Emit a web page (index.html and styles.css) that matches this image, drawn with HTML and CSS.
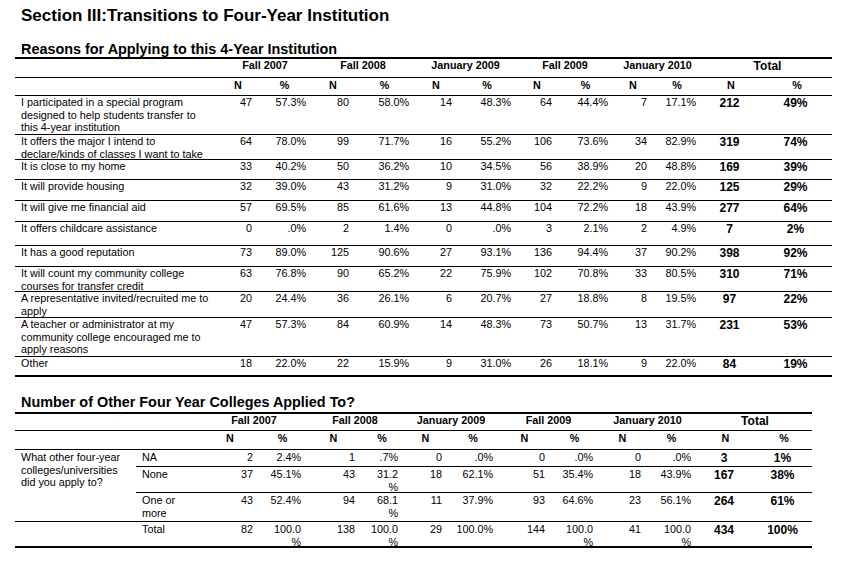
FILE: index.html
```html
<!DOCTYPE html>
<html>
<head>
<meta charset="utf-8">
<title>Section III</title>
<link rel="stylesheet" href="styles.css">
</head>
<body>
<div class="page">
  <h1 class="title">Section III:Transitions to Four-Year Institution</h1>

  <h2 class="subtitle s1">Reasons for Applying to this 4-Year Institution</h2>
  <div class="t1">
    <div class="row grp h19">
      <div></div>
      <div class="hd">Fall 2007</div>
      <div class="hd">Fall 2008</div>
      <div class="hd">January 2009</div>
      <div class="hd">Fall 2009</div>
      <div class="hd">January 2010</div>
      <div class="hd big">Total</div>
    </div>
    <div class="row cols sub h18">
      <div></div>
      <div class="hd">N</div><div class="hd">%</div>
      <div class="hd">N</div><div class="hd">%</div>
      <div class="hd">N</div><div class="hd">%</div>
      <div class="hd">N</div><div class="hd">%</div>
      <div class="hd">N</div><div class="hd">%</div>
      <div class="hd">N</div><div class="hd">%</div>
    </div>
    <div class="row cols h39">
      <div class="lbl">I participated in a special program<br>designed to help students transfer to<br>this 4-year institution</div>
      <div class="num">47</div><div class="num">57.3%</div>
      <div class="num">80</div><div class="num">58.0%</div>
      <div class="num">14</div><div class="num">48.3%</div>
      <div class="num">64</div><div class="num">44.4%</div>
      <div class="num">7</div><div class="num">17.1%</div>
      <div class="tot">212</div><div class="tot">49%</div>
    </div>
    <div class="row cols h25">
      <div class="lbl">It offers the major I intend to<br>declare/kinds of classes I want to take</div>
      <div class="num">64</div><div class="num">78.0%</div>
      <div class="num">99</div><div class="num">71.7%</div>
      <div class="num">16</div><div class="num">55.2%</div>
      <div class="num">106</div><div class="num">73.6%</div>
      <div class="num">34</div><div class="num">82.9%</div>
      <div class="tot">319</div><div class="tot">74%</div>
    </div>
    <div class="row cols h20">
      <div class="lbl">It is close to my home</div>
      <div class="num">33</div><div class="num">40.2%</div>
      <div class="num">50</div><div class="num">36.2%</div>
      <div class="num">10</div><div class="num">34.5%</div>
      <div class="num">56</div><div class="num">38.9%</div>
      <div class="num">20</div><div class="num">48.8%</div>
      <div class="tot">169</div><div class="tot">39%</div>
    </div>
    <div class="row cols h21">
      <div class="lbl">It will provide housing</div>
      <div class="num">32</div><div class="num">39.0%</div>
      <div class="num">43</div><div class="num">31.2%</div>
      <div class="num">9</div><div class="num">31.0%</div>
      <div class="num">32</div><div class="num">22.2%</div>
      <div class="num">9</div><div class="num">22.0%</div>
      <div class="tot">125</div><div class="tot">29%</div>
    </div>
    <div class="row cols h21">
      <div class="lbl">It will give me financial aid</div>
      <div class="num">57</div><div class="num">69.5%</div>
      <div class="num">85</div><div class="num">61.6%</div>
      <div class="num">13</div><div class="num">44.8%</div>
      <div class="num">104</div><div class="num">72.2%</div>
      <div class="num">18</div><div class="num">43.9%</div>
      <div class="tot">277</div><div class="tot">64%</div>
    </div>
    <div class="row cols h24">
      <div class="lbl">It offers childcare assistance</div>
      <div class="num">0</div><div class="num">.0%</div>
      <div class="num">2</div><div class="num">1.4%</div>
      <div class="num">0</div><div class="num">.0%</div>
      <div class="num">3</div><div class="num">2.1%</div>
      <div class="num">2</div><div class="num">4.9%</div>
      <div class="tot">7</div><div class="tot">2%</div>
    </div>
    <div class="row cols h21">
      <div class="lbl">It has a good reputation</div>
      <div class="num">73</div><div class="num">89.0%</div>
      <div class="num">125</div><div class="num">90.6%</div>
      <div class="num">27</div><div class="num">93.1%</div>
      <div class="num">136</div><div class="num">94.4%</div>
      <div class="num">37</div><div class="num">90.2%</div>
      <div class="tot">398</div><div class="tot">92%</div>
    </div>
    <div class="row cols h25">
      <div class="lbl">It will count my community college<br>courses for transfer credit</div>
      <div class="num">63</div><div class="num">76.8%</div>
      <div class="num">90</div><div class="num">65.2%</div>
      <div class="num">22</div><div class="num">75.9%</div>
      <div class="num">102</div><div class="num">70.8%</div>
      <div class="num">33</div><div class="num">80.5%</div>
      <div class="tot">310</div><div class="tot">71%</div>
    </div>
    <div class="row cols h26">
      <div class="lbl">A representative invited/recruited me to<br>apply</div>
      <div class="num">20</div><div class="num">24.4%</div>
      <div class="num">36</div><div class="num">26.1%</div>
      <div class="num">6</div><div class="num">20.7%</div>
      <div class="num">27</div><div class="num">18.8%</div>
      <div class="num">8</div><div class="num">19.5%</div>
      <div class="tot">97</div><div class="tot">22%</div>
    </div>
    <div class="row cols h39">
      <div class="lbl">A teacher or administrator at my<br>community college encouraged me to<br>apply reasons</div>
      <div class="num">47</div><div class="num">57.3%</div>
      <div class="num">84</div><div class="num">60.9%</div>
      <div class="num">14</div><div class="num">48.3%</div>
      <div class="num">73</div><div class="num">50.7%</div>
      <div class="num">13</div><div class="num">31.7%</div>
      <div class="tot">231</div><div class="tot">53%</div>
    </div>
    <div class="row cols h18 last">
      <div class="lbl">Other</div>
      <div class="num">18</div><div class="num">22.0%</div>
      <div class="num">22</div><div class="num">15.9%</div>
      <div class="num">9</div><div class="num">31.0%</div>
      <div class="num">26</div><div class="num">18.1%</div>
      <div class="num">9</div><div class="num">22.0%</div>
      <div class="tot">84</div><div class="tot">19%</div>
    </div>
  </div>

  <h2 class="subtitle s2">Number of Other Four Year Colleges Applied To?</h2>
  <div class="t2">
    <div class="row grp h17">
      <div></div>
      <div class="hd">Fall 2007</div>
      <div class="hd">Fall 2008</div>
      <div class="hd">January 2009</div>
      <div class="hd">Fall 2009</div>
      <div class="hd">January 2010</div>
      <div class="hd big">Total</div>
    </div>
    <div class="row full sub h19">
      <div></div><div></div>
      <div class="hd">N</div><div class="hd">%</div>
      <div class="hd">N</div><div class="hd">%</div>
      <div class="hd">N</div><div class="hd">%</div>
      <div class="hd">N</div><div class="hd">%</div>
      <div class="hd">N</div><div class="hd">%</div>
      <div class="hd">N</div><div class="hd">%</div>
    </div>
    <div class="block">
      <div class="lbl q">What other four-year<br>colleges/universities<br>did you apply to?</div>
      <div class="inner">
        <div class="row part h17">
          <div class="lbl">NA</div>
          <div class="num">2</div><div class="num">2.4%</div>
          <div class="num">1</div><div class="num">.7%</div>
          <div class="num">0</div><div class="num">.0%</div>
          <div class="num">0</div><div class="num">.0%</div>
          <div class="num">0</div><div class="num">.0%</div>
          <div class="tot">3</div><div class="tot">1%</div>
        </div>
        <div class="row part h26">
          <div class="lbl">None</div>
          <div class="num">37</div><div class="num">45.1%</div>
          <div class="num">43</div><div class="num">31.2<br>%</div>
          <div class="num">18</div><div class="num">62.1%</div>
          <div class="num">51</div><div class="num">35.4%</div>
          <div class="num">18</div><div class="num">43.9%</div>
          <div class="tot">167</div><div class="tot">38%</div>
        </div>
        <div class="row part h28 last">
          <div class="lbl">One or<br>more</div>
          <div class="num">43</div><div class="num">52.4%</div>
          <div class="num">94</div><div class="num">68.1<br>%</div>
          <div class="num">11</div><div class="num">37.9%</div>
          <div class="num">93</div><div class="num">64.6%</div>
          <div class="num">23</div><div class="num">56.1%</div>
          <div class="tot">264</div><div class="tot">61%</div>
        </div>
      </div>
    </div>
    <div class="row full h24 last">
      <div></div>
      <div class="lbl">Total</div>
      <div class="num">82</div><div class="num">100.0<br>%</div>
      <div class="num">138</div><div class="num">100.0<br>%</div>
      <div class="num">29</div><div class="num">100.0%</div>
      <div class="num">144</div><div class="num">100.0<br>%</div>
      <div class="num">41</div><div class="num">100.0<br>%</div>
      <div class="tot">434</div><div class="tot">100%</div>
    </div>
  </div>
</div>
</body>
</html>
```

FILE: styles.css
```css
* { box-sizing: border-box; }

body {
  margin: 0;
  background: #fff;
  color: #000;
  font-family: "Liberation Sans", Arial, sans-serif;
}

.page {
  padding-top: 5px;
}

.title {
  margin: 0 0 0 21px;
  font-size: 17px;
  line-height: 21px;
  font-weight: bold;
}

.subtitle {
  margin: 0 0 0 21px;
  font-size: 14.4px;
  line-height: 15px;
  font-weight: bold;
}
.s1 { margin-top: 16px; }
.s2 { margin-top: 18px; margin-bottom: 2px; }

.t1, .t2 {
  margin-left: 15px;
  border-top: 2px solid #000;
  border-bottom: 2px solid #000;
  font-size: 10.8px;
  line-height: 12.6px;
}
.t1 { width: 817px; }
.t2 { width: 797px; }

.row {
  display: grid;
  border-bottom: 1px solid #000;
}
.row.last { border-bottom: none; }

.t1 .grp { grid-template-columns: 202px 93px 103px 102px 97px 88px 132px; }
.t1 .cols { grid-template-columns: 202px 39px 54px 43px 60px 43px 59px 41px 56px 39px 49px 59px 73px; }

.t2 .grp { grid-template-columns: 185px 105px 97px 95px 100px 98px 117px; }
.t2 .full { grid-template-columns: 121px 64px 57px 48px 54px 43px 44px 51px 52px 48px 48px 50px 58px 59px; }
.t2 .part { grid-template-columns: 64px 57px 48px 54px 43px 44px 51px 52px 48px 48px 50px 58px 59px; }

.block {
  display: grid;
  grid-template-columns: 121px 676px;
  border-bottom: 1px solid #000;
}

.t2 .row > div, .t2 .q { padding-top: 1px; }
.t2 .grp > div { padding-top: 0; }

.h17 { height: 17px; }
.h18 { height: 18px; }
.h19 { height: 19px; }
.h20 { height: 20px; }
.h21 { height: 21px; }
.h24 { height: 24px; }
.h25 { height: 25px; }
.h26 { height: 26px; }
.h28 { height: 28px; }
.h39 { height: 39px; }

.hd {
  font-weight: bold;
  text-align: center;
  padding-left: 3px;
}
.sub .hd { padding-top: 1px; }
.hd.big {
  font-size: 12px;
  line-height: 14px;
}

.lbl {
  padding-left: 6px;
  white-space: nowrap;
}

.num {
  text-align: right;
  padding-right: 4px;
  white-space: nowrap;
}

.tot {
  text-align: center;
  font-weight: bold;
  font-size: 12px;
  line-height: 14px;
}
```
